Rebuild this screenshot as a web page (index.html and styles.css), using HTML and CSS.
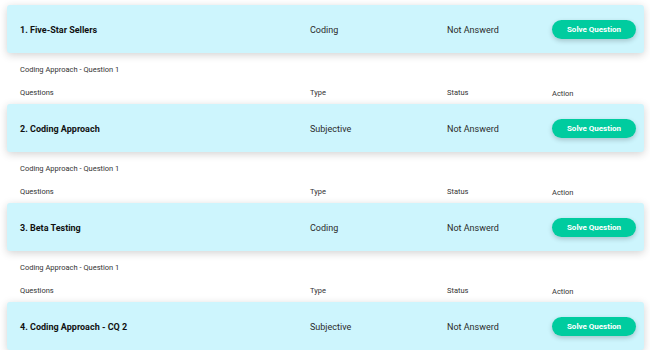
FILE: index.html
```html
<!DOCTYPE html>
<html lang="en">
<head>
  <meta charset="UTF-8">
  <meta name="viewport" content="width=device-width, initial-scale=1.0">
  <title>Questions</title>
  <link rel="stylesheet" href="styles.css">
</head>
<body>
  <main class="list">
    <div class="card">
      <span class="title">1. Five-Star Sellers</span>
      <span>Coding</span>
      <span>Not Answerd</span>
      <button class="solve">Solve Question</button>
    </div>
    <p class="sub">Coding Approach - Question 1</p>
    <div class="head">
      <span>Questions</span><span>Type</span><span>Status</span><span class="act">Action</span>
    </div>

    <div class="card">
      <span class="title">2. Coding Approach</span>
      <span>Subjective</span>
      <span>Not Answerd</span>
      <button class="solve">Solve Question</button>
    </div>
    <p class="sub">Coding Approach - Question 1</p>
    <div class="head">
      <span>Questions</span><span>Type</span><span>Status</span><span class="act">Action</span>
    </div>

    <div class="card">
      <span class="title">3. Beta Testing</span>
      <span>Coding</span>
      <span>Not Answerd</span>
      <button class="solve">Solve Question</button>
    </div>
    <p class="sub">Coding Approach - Question 1</p>
    <div class="head">
      <span>Questions</span><span>Type</span><span>Status</span><span class="act">Action</span>
    </div>

    <div class="card">
      <span class="title">4. Coding Approach - CQ 2</span>
      <span>Subjective</span>
      <span>Not Answerd</span>
      <button class="solve">Solve Question</button>
    </div>
  </main>
</body>
</html>
```

FILE: styles.css
```css
body {
  font-family: Roboto, 'Liberation Sans', sans-serif;
  margin: 0;
  background: #fff;
  color: #2b2b2b;
}
.list {
  padding: 5px 6px 0 7px;
}
.card, .head {
  display: grid;
  grid-template-columns: 290px 137px 105px 1fr;
  align-items: center;
  padding-left: 13px;
}
.card {
  height: 48px;
  background: #cdf5fd;
  border-radius: 3px;
  box-shadow: 0 2px 8px rgba(0,0,0,0.18);
  font-size: 9px;
}
.card span {
  padding-top: 2px;
}
.title {
  font-weight: 700;
  color: #111;
}
.solve {
  width: 84px;
  height: 19px;
  border: none;
  border-radius: 10px;
  background: #00cc9f;
  color: #fff;
  font-family: inherit;
  font-size: 8px;
  font-weight: 700;
  box-shadow: 0 2px 5px rgba(0,0,0,0.2);
  padding: 0;
}
.sub {
  margin: 0;
  padding-left: 13px;
  font-size: 7.5px;
  height: 23px;
  line-height: 34px;
  color: #333;
}
.head {
  font-size: 7.5px;
  height: 28px;
  color: #333;
}
.head span {
  padding-top: 4px;
}
.head .act {
  padding-top: 7px;
}
```
